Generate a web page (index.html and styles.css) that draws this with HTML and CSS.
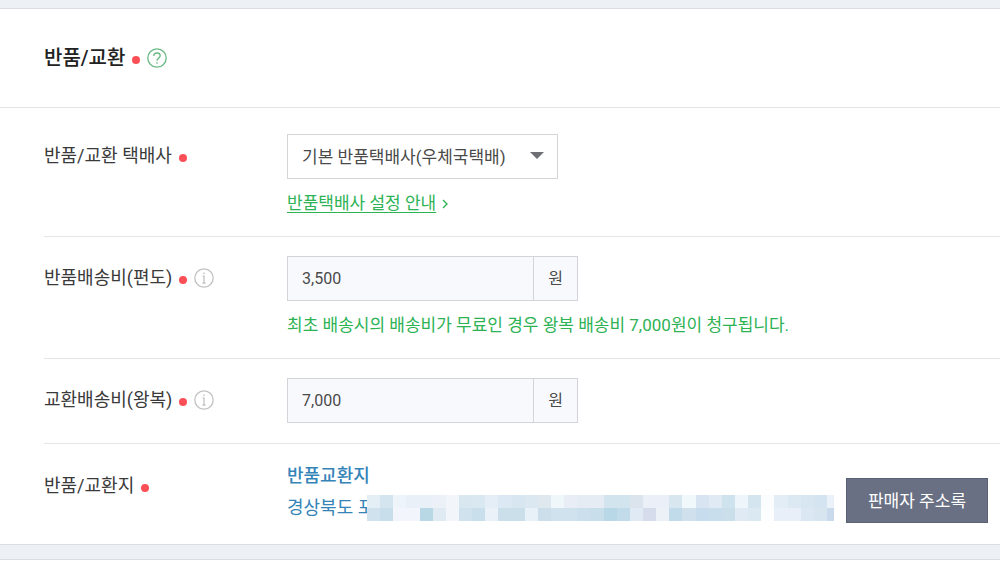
FILE: index.html
```
<!DOCTYPE html>
<html lang="ko">
<head>
<meta charset="utf-8">
<title>반품/교환</title>
<link rel="stylesheet" href="styles.css">
</head>
<body>
<main class="page">
  <section class="panel">
    <header class="panel-head">
      <h2 class="panel-title">반품/교환</h2>
      <span class="dot"></span>
      <button class="icon-btn help-btn" type="button" aria-label="도움말">
        <svg viewBox="0 0 20 20" width="20" height="20" fill="none" stroke="currentColor" stroke-width="1.3"><circle cx="10" cy="10" r="9.2"/><path d="M6.800 8C6.800 6 8.200 5 10 5s3.200 1.100 3.200 2.800c0 2.300-3.200 2.400-3.200 4.900"/><circle cx="10" cy="14.900" r=".5" fill="currentColor" stroke-width=".6"/></svg>
      </button>
    </header>

    <div class="rows">
      <div class="row row-first">
        <div class="label-cell"><label for="courier">반품/교환 택배사</label><span class="dot"></span></div>
        <div class="field">
          <div class="select-wrap">
            <select id="courier" class="select"><option>기본 반품택배사(우체국택배)</option></select>
            <svg class="caret" viewBox="0 0 14 7" width="14" height="7"><path d="M0 0h14L7 7z" fill="#6e7076"/></svg>
          </div>
          <p class="note"><a class="guide" href="#guide">반품택배사 설정 안내</a><svg class="chev" viewBox="0 0 6 10" width="6" height="10" fill="none" stroke="currentColor" stroke-width="1.4"><path d="M1 1l4 4-4 4"/></svg></p>
        </div>
      </div>

      <div class="row">
        <div class="label-cell"><label for="return-fee">반품배송비(편도)</label><span class="dot"></span>
          <button class="icon-btn" type="button" aria-label="반품배송비 안내">
            <svg viewBox="0 0 20 20" width="20" height="20" fill="none" stroke="currentColor" stroke-width="1.3"><circle cx="10" cy="10" r="9.200"/><path d="M8.500 8.200H10v6.800M8.500 15h3"/><circle cx="10" cy="5.300" r=".6" fill="currentColor" stroke-width=".6"/></svg>
          </button>
        </div>
        <div class="field">
          <div class="money"><input id="return-fee" class="money-input" type="text" value="3,500"><span class="unit">원</span></div>
          <p class="note">최초 배송시의 배송비가 무료인 경우 왕복 배송비 7,000원이 청구됩니다.</p>
        </div>
      </div>

      <div class="row row-short">
        <div class="label-cell"><label for="exchange-fee">교환배송비(왕복)</label><span class="dot"></span>
          <button class="icon-btn" type="button" aria-label="교환배송비 안내">
            <svg viewBox="0 0 20 20" width="20" height="20" fill="none" stroke="currentColor" stroke-width="1.3"><circle cx="10" cy="10" r="9.200"/><path d="M8.500 8.200H10v6.800M8.500 15h3"/><circle cx="10" cy="5.300" r=".6" fill="currentColor" stroke-width=".6"/></svg>
          </button>
        </div>
        <div class="field">
          <div class="money"><input id="exchange-fee" class="money-input" type="text" value="7,000"><span class="unit">원</span></div>
        </div>
      </div>

      <div class="row row-last">
        <div class="label-cell"><span>반품/교환지</span><span class="dot"></span></div>
        <div class="field address">
          <div class="address-text">
            <strong class="address-name">반품교환지</strong>
            <div class="address-line"><span class="region">경상북도 포</span><svg class="mosaic" id="mosaic" viewBox="0 0 467 26" preserveAspectRatio="none" shape-rendering="crispEdges" aria-hidden="true"></svg></div>
          </div>
          <button class="book-btn" type="button">판매자 주소록</button>
        </div>
      </div>
    </div>
  </section>
  <div class="next-panel"></div>
</main>
<script src="mosaic.js"></script>
</body>
</html>
```
FILE: mosaic.js
```
// Pixelated cover over the private part of the address
const tones = [
  "e4eff5 d5e5ef eef5fa eaf0f8 eaf0f8 ecf1f8 f2f6fa d8e7f0 dae8f2 e5eef7 dce8f3 d8e6f1 dbe8f1 dfe7ef f0f7fb e9eef6 e6ecf4 e6ecf4 d2e5ee d2e5ee dbe4ec ebeff7 ebeff7 d8e6ef f1f8fc d9e4f2 dfeaf4 cfe3ee eff6fb d5e5ef fafcfe e3edf6 dce9f3 d8e6f2 d4e4f0 eaf1f8",
  "cfe2ed c8deeb f2f5fb f2f5fb b9d8e6 dfeaf3 f2f6fb d0e2ed cadfec eaf1f8 cbdfeb cbdfeb e8f1f8 cbdeea cfe2ee cfe2ee cbe0ec c8dfeb b8d8e7 c2dbea dfeaf5 d6dcec ecf1f8 c1dbeb d0e1ed c7dded c9deec cbdfea dfeaf5 dbe9f3 fbfdfe e9eff8 e9eff8 dbe7f3 d7e5f1 c8daec"
];
const cell = 13.15;
document.getElementById("mosaic").innerHTML = tones.map((line, r) =>
  line.split(" ").map((c, i) =>
    `<rect x="${i * cell}" y="${r * 13}" width="${cell}" height="13" fill="#${c}"/>`).join("")
).join("");
```
FILE: styles.css
```
* { box-sizing: border-box; }

body {
  margin: 0;
  background: #edf0f5;
  color: #3a3a3a;
  font: 17px/24px Roboto, "Noto Sans CJK KR", sans-serif;
}

h2, p { margin: 0; }

button, input, select { font: inherit; color: inherit; }

.page {
  display: flex;
  flex-direction: column;
  gap: 14px;
  min-height: 100vh;
  padding-top: 8px;
}

.panel {
  background: #fff;
  border-top: 1px solid #d9dce0;
  border-bottom: 1px solid #dbdfe4;
}

.next-panel {
  flex: 1;
  background: #fff;
  border-top: 1px solid #d9dce0;
}

.panel-head {
  display: flex;
  align-items: center;
  height: 99px;
  padding-left: 44px;
  border-bottom: 1px solid #e2e4e7;
}

.panel-title {
  font-size: 20px;
  line-height: 28px;
  font-weight: 500;
  color: #222;
}

.dot {
  flex: none;
  width: 8px;
  height: 8px;
  margin: 4px 0 0 7px;
  border-radius: 50%;
  background: #fb4f58;
}

.icon-btn {
  display: block;
  flex: none;
  height: 20px;
  margin-left: 7px;
  padding: 0;
  border: 0;
  background: none;
  color: #c2c2c2;
}

.icon-btn svg { display: block; }

.help-btn { color: #68b883; }

.rows { padding-left: 44px; }

.row {
  display: grid;
  grid-template-columns: 243px minmax(0, 1fr);
  padding: 19px 0 21px;
  border-bottom: 1px solid #e5e5e5;
}

.row-first { padding-top: 26px; }

.row-short { padding-bottom: 20px; }

.row-last {
  padding-top: 20px;
  border-bottom: 0;
}

.label-cell {
  display: flex;
  align-items: center;
  align-self: start;
  height: 24px;
  margin-top: 10px;
  font-size: 18px;
  white-space: nowrap;
}

.select-wrap {
  position: relative;
  width: 271px;
}

.select {
  display: block;
  width: 100%;
  height: 45px;
  padding: 0 36px 0 14px;
  appearance: none;
  border: 1px solid #d5d5d8;
  border-radius: 0;
  background: #fff;
  color: #4a4a4a;
}

.caret {
  position: absolute;
  right: 14px;
  top: 18px;
  pointer-events: none;
}

.note {
  margin-top: 12px;
  color: #2db254;
}

.guide {
  color: inherit;
  text-underline-offset: 3px;
}

.chev { margin-left: 6px; }

.money {
  display: flex;
  width: 291px;
  height: 45px;
  border: 1px solid #d2d4d9;
  background: #f8f9fd;
  color: #4a4a4a;
}

.money-input {
  flex: 1;
  min-width: 0;
  padding: 0 14px;
  border: 0;
  background: none;
  font-size: 16px;
}

.unit {
  display: grid;
  place-items: center;
  width: 44px;
  border-left: 1px solid #d2d4d9;
  font-size: 16px;
}

.address {
  display: flex;
  gap: 12px;
  padding-right: 12px;
}

.address-text {
  flex: 1;
  min-width: 0;
  color: #3584b8;
  font-size: 18px;
}

.address-name {
  display: block;
  font-weight: 500;
}

.address-line {
  display: flex;
  align-items: center;
  margin-top: 7px;
  white-space: nowrap;
}

.mosaic {
  position: relative;
  flex: 1;
  min-width: 0;
  height: 26px;
  margin-left: -7px;
}

.book-btn {
  width: 142px;
  height: 45px;
  margin-top: 14px;
  padding: 0;
  border: 1px solid #5b6274;
  background: #697084;
  color: #fff;
}
```
